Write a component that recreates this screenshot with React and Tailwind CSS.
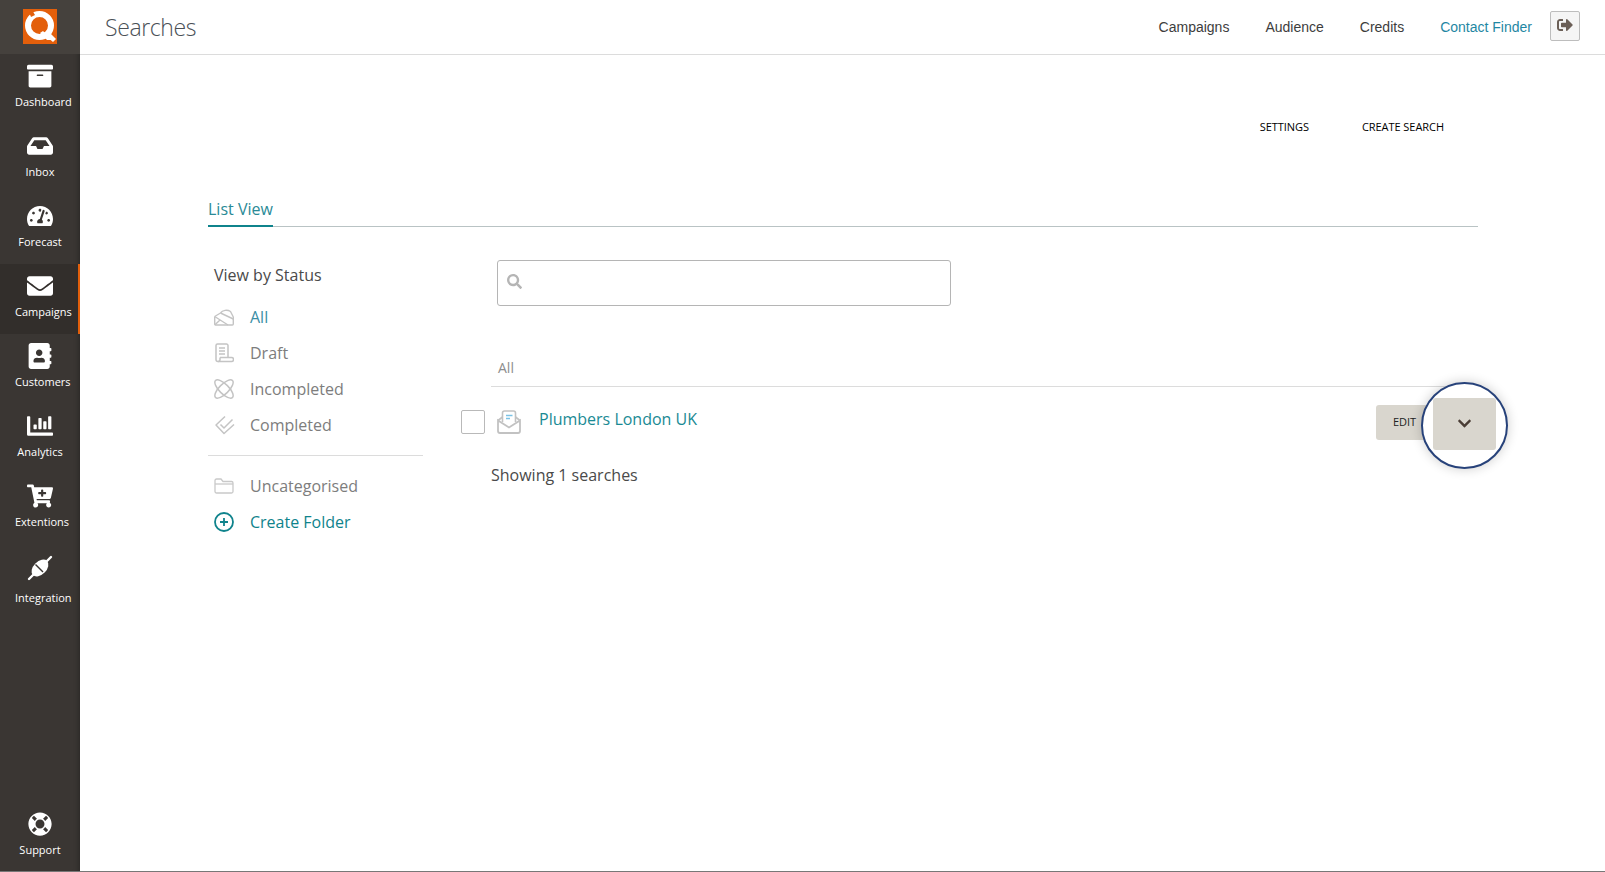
import React from "react";
import {
  FaArchive,
  FaInbox,
  FaTachometerAlt,
  FaEnvelope,
  FaAddressBook,
  FaChartBar,
  FaCartPlus,
  FaLifeRing,
  FaSignOutAlt,
  FaChevronDown,
  FaSearch,
} from "react-icons/fa";

const sideItems = [
  { label: "Dashboard", icon: FaArchive },
  { label: "Inbox", icon: FaInbox },
  { label: "Forecast", icon: FaTachometerAlt },
  { label: "Campaigns", icon: FaEnvelope, active: true },
  { label: "Customers", icon: FaAddressBook },
  { label: "Analytics", icon: FaChartBar },
  { label: "Extentions", icon: FaCartPlus },
];

const SideItem = ({ label, icon: Icon, active, topClass = "pt-[8px]", labelClass = "mt-[4px]" }) => (
  <a
    className={`flex h-[70px] flex-col items-center ${topClass} ${
      active ? "border-r-2 border-[#e35f0b] bg-[#322e2b] pl-[2px]" : ""
    }`}
  >
    <span className="flex h-[28px] items-center justify-center">
      <Icon className="text-[26px] text-white" />
    </span>
    <span className={`${labelClass} w-[50px] whitespace-nowrap text-center text-[11px] leading-[16px] text-white`}>
      {label}
    </span>
  </a>
);

const PlugIcon = () => (
  <svg width="26" height="26" viewBox="0 0 26 26">
    <path d="M2 24 7 19M19 7l5-5" stroke="#fff" strokeWidth="2.400" strokeLinecap="round" />
    <ellipse cx="13" cy="13" rx="10" ry="6.500" transform="rotate(-45 13 13)" fill="#fff" />
    <path d="M8.500 9.500 16 17" stroke="#3a3633" strokeWidth="1.400" />
  </svg>
);

const AllIcon = () => (
  <svg width="20" height="17" viewBox="0 0 20 17" fill="none" stroke="#c4c4c4" strokeWidth="1.400" strokeLinejoin="round">
    <path d="M0.700 7.500V15a1 1 0 0 0 1 1H18.300a1 1 0 0 0 1-1V10" />
    <path d="M0.700 7.500 6.500 4" />
    <path d="M6.500 4a6.500 5 0 0 1 10-1.500L19.300 8v2" />
    <path d="M6.500 4 19.300 10M0.700 7.500 14 16M0.700 16 6 11" />
  </svg>
);

const DraftIcon = () => (
  <svg width="20" height="20" viewBox="0 0 20 20" fill="none" stroke="#c4c4c4" strokeWidth="1.500">
    <path d="M2 15V2.500A1.500 1.500 0 0 1 3.500 1h9A1.500 1.500 0 0 1 14 2.500V14" />
    <path d="M5 5h6M5 8h6M5 11h6" />
    <path d="M6 14.500h11.500a1.800 1.800 0 0 1 0 4H4a2 2 0 0 1-2-2V15" />
    <path d="M6 14.500v2a2 2 0 0 1-2 2" />
  </svg>
);

const IncompleteIcon = () => (
  <svg width="20" height="20" viewBox="0 0 20 20" fill="none" stroke="#c4c4c4" strokeWidth="1.500">
    <ellipse cx="10" cy="10" rx="12" ry="4.800" transform="rotate(45 10 10)" />
    <ellipse cx="10" cy="10" rx="12" ry="4.800" transform="rotate(-45 10 10)" />
  </svg>
);

const CompleteIcon = () => (
  <svg width="22" height="20" viewBox="0 0 22 20" fill="none" stroke="#c4c4c4" strokeWidth="1.500" strokeLinejoin="round">
    <path d="M11 1.500 2 10l8 8.500 10-9" />
    <path d="M6.500 9.500 10 13 18.500 4.500" />
  </svg>
);

const FolderIcon = () => (
  <svg width="20" height="16" viewBox="0 0 20 16" fill="none" stroke="#c9c9c9" strokeWidth="1.300">
    <path d="M1 13.500V2.500A1.500 1.500 0 0 1 2.500 1h4.500l2 2.500h8.500A1.500 1.500 0 0 1 19 5v8.500a1.500 1.500 0 0 1-1.500 1.500h-15A1.500 1.500 0 0 1 1 13.500z" />
    <path d="M1 6h18" />
  </svg>
);

const PlusCircleIcon = () => (
  <svg width="20" height="20" viewBox="0 0 20 20" fill="none" stroke="#0f838c" strokeWidth="1.800">
    <circle cx="10" cy="10" r="9" />
    <path d="M10 6v8M6 10h8" />
  </svg>
);

const MailDocIcon = () => (
  <svg width="24" height="24" viewBox="0 0 24 24" fill="none">
    <path d="M1 10.500 5.500 7M23 10.500 18.500 7" stroke="#c2c2c2" strokeWidth="1.600" />
    <path d="M5.500 12V3a2 2 0 0 1 2-2h9a2 2 0 0 1 2 2v9" stroke="#c2c2c2" strokeWidth="1.600" />
    <path d="M9 5.500h6.500M9 8.500h4" stroke="#7cc3e6" strokeWidth="1.600" />
    <path d="M1 10.500v10.500a2 2 0 0 0 2 2h18a2 2 0 0 0 2-2V10.500l-11 7z" stroke="#c2c2c2" strokeWidth="1.800" />
  </svg>
);

const Logo = () => (
  <svg width="34" height="35" viewBox="0 0 34 35">
    <rect width="34" height="35" fill="#e35f0b" />
    <circle cx="16.500" cy="16.500" r="11.500" fill="none" stroke="#fff" strokeWidth="6" />
    <path d="M20 22 L29 31 L24 31 L17 24z" fill="#fff" />
    <path d="M6 3 9 1 12 6 8 8z" fill="#e35f0b" />
    <path d="M24 28 27 24 33 30 30 33z" fill="#fff" />
  </svg>
);

const statusItems = [
  { label: "All", icon: AllIcon, color: "text-[#3b8ea5]" },
  { label: "Draft", icon: DraftIcon, color: "text-[#7d7d7d]" },
  { label: "Incompleted", icon: IncompleteIcon, color: "text-[#7d7d7d]" },
  { label: "Completed", icon: CompleteIcon, color: "text-[#7d7d7d]" },
];

const StatusRow = ({ label, icon: Icon, color }) => (
  <div className="flex h-[36px] items-center">
    <span className="flex w-[37px] items-center pl-[1px]">
      <Icon />
    </span>
    <span className={`text-[16px] ${color}`}>{label}</span>
  </div>
);

export default function App() {
  return (
    <div className="box-border flex h-[872px] w-[1605px] overflow-hidden border-b border-[#777] bg-white font-['Open_Sans',sans-serif]">
      {/* SIDEBAR */}
      <aside className="flex w-[80px] shrink-0 flex-col bg-[#3a3633] shadow-[inset_-6px_0_6px_-6px_rgba(0,0,0,0.4)]">
        <div className="flex h-[54px] items-center justify-center bg-[#45413d] pb-[2px]">
          <Logo />
        </div>
        {sideItems.map((item) => (
          <SideItem key={item.label} {...item} />
        ))}
        <SideItem label="Integration" icon={PlugIcon} topClass="pt-[10px]" labelClass="mt-[8px]" />
        <div className="mt-auto pb-[13px]">
          <div className="flex flex-col items-center">
            <FaLifeRing className="text-[24px] text-white" />
            <span className="mt-[6px] w-[50px] text-center text-[11px] leading-[16px] text-white">
              Support
            </span>
          </div>
        </div>
      </aside>

      <div className="flex min-w-0 flex-1 flex-col">
        {/* TOP BAR */}
        <header className="flex h-[55px] shrink-0 items-center justify-between border-b border-[#dcdcdc] pl-[25px] pr-[25px]">
          <h1 className="text-[23px] font-light tracking-[-0.4px] text-[#4a5056]">Searches</h1>
          <nav className="flex items-center font-['Liberation_Sans',sans-serif] text-[14px] text-[#3d3d3d]">
            <a className="mr-[36px]">Campaigns</a>
            <a className="mr-[36px]">Audience</a>
            <a className="mr-[36px]">Credits</a>
            <a className="mr-[18px] text-[#1f87a3]">Contact Finder</a>
            <button className="flex h-[30px] w-[30px] -translate-y-[1px] items-center justify-center rounded-[2px] border border-[#bdbdbd] bg-[#f5f5f5] pb-[3px]">
              <FaSignOutAlt className="text-[16px] text-[#6b5f57]" />
            </button>
          </nav>
        </header>

        {/* PAGE ACTIONS */}
        <div className="flex justify-end gap-[53px] pr-[161px] pt-[64px] text-[11px] leading-[16px] tracking-[-0.05px] text-black">
          <a>SETTINGS</a>
          <a>CREATE SEARCH</a>
        </div>

        {/* TABS */}
        <div className="ml-[128px] mr-[127px] mt-[62px] border-b border-[#b9c3c4]">
          <a className="-mb-px inline-block border-b-2 border-[#0f838c] pb-[5px] text-[16px] leading-[22px] text-[#2a8a96]">
            List View
          </a>
        </div>

        <div className="ml-[128px] mr-[127px] flex">
          {/* STATUS COLUMN */}
          <div className="w-[215px] shrink-0 pt-[36px]">
            <div className="mb-[12px] pl-[6px] text-[16px] leading-[24px] text-[#4a4a4a]">View by Status</div>
            <div className="pl-[5px]">
              {statusItems.map((s) => (
                <StatusRow key={s.label} {...s} />
              ))}
            </div>
            <div className="mt-[12px] border-t border-[#dcdcdc] pl-[5px] pt-[12px]">
              <StatusRow label="Uncategorised" icon={FolderIcon} color="text-[#7d7d7d]" />
              <StatusRow label="Create Folder" icon={PlusCircleIcon} color="text-[#0f838c]" />
            </div>
          </div>

          {/* LIST COLUMN */}
          <div className="relative min-w-0 flex-1">
            <div className="ml-[74px] mt-[33px] flex h-[46px] w-[454px] items-center rounded-[3px] border border-[#b5b5b5] pb-[3px] pl-[9px]">
              <FaSearch className="text-[15px] text-[#b5b5b5]" />
            </div>
            <div className="ml-[68px] mt-[52px] border-b border-[#dcdcdc] pb-[8px] pl-[7px] text-[14px] leading-[20px] text-[#8d8d8d]">
              All
            </div>
            <div className="ml-[38px] flex h-[70px] items-center">
              <span className="h-[24px] w-[24px] rounded-[2px] border border-[#b9b9b9]" />
              <span className="ml-[12px]">
                <MailDocIcon />
              </span>
              <a className="ml-[18px] -translate-y-[3px] text-[16px] text-[#1a8a94]">Plumbers London UK</a>
              <button className="ml-auto mr-[42px] h-[35px] w-[60px] rounded-[3px] bg-[#d9d6ce] pr-[3px] text-[11px] text-[#222]">
                EDIT
              </button>
            </div>
            <div className="ml-[68px] mt-[6px] text-[16px] leading-[24px] text-[#4a4a4a]">Showing 1 searches</div>

            {/* highlight ring round the dropdown */}
            <div className="absolute left-[998px] top-[155px] flex h-[87px] w-[87px] items-center justify-center rounded-full border-2 border-[#27427a] bg-white pb-[3px] shadow-[0_0_12px_rgba(0,0,0,0.2)]">
              <button className="flex h-[52px] w-[63px] items-center justify-center rounded-[3px] bg-[#d9d6ce] pb-[2px]">
                <FaChevronDown className="text-[15px] text-[#4a3d35]" />
              </button>
            </div>
          </div>
        </div>
      </div>
    </div>
  );
}
